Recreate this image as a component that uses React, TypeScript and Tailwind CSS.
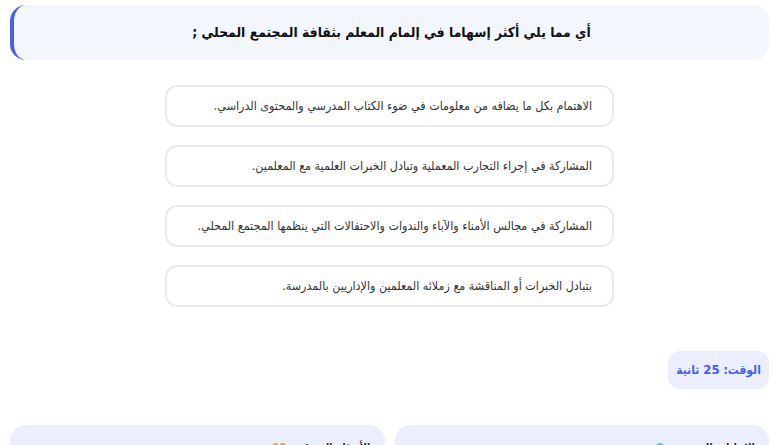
import React from "react";

const options = [
  "الاهتمام بكل ما يضافه من معلومات في ضوء الكتاب المدرسي والمحتوى الدراسي.",
  "المشاركة في إجراء التجارب المعملية وتبادل الخبرات العلمية مع المعلمين.",
  "المشاركة في مجالس الأمناء والآباء والندوات والاحتفالات التي ينظمها المجتمع المحلي.",
  "بتبادل الخبرات أو المناقشة مع زملائه المعلمين والإداريين بالمدرسة.",
];

export default function App() {
  return (
    <div
      dir="rtl"
      className="w-[779px] h-[445px] overflow-hidden bg-white px-[10px] pt-[5px]"
      style={{ fontFamily: '"DejaVu Sans Condensed", "DejaVu Sans", sans-serif' }}
    >
      <div className="h-[55px] rounded-2xl bg-[#f4f6fe] border-l-[4px] border-[#4361ee] flex items-center justify-center">
        <h1 className="text-[13.8px] font-bold text-[#111]">
          أي مما يلي أكثر إسهاما في إلمام المعلم بثقافة المجتمع المحلي ;
        </h1>
      </div>

      <div className="mt-[25px] flex flex-col items-center gap-[18px]">
        {options.map((o, i) => (
          <div
            key={i}
            className="w-[449px] h-[42px] rounded-xl border-2 border-[#e8eaee] bg-white flex items-center pr-[20px] pl-2 text-[12.4px] text-[#333] whitespace-nowrap"
          >
            {o}
          </div>
        ))}
      </div>

      <div className="mt-[44px] flex">
        <div className="h-[38px] w-[101px] rounded-xl bg-[#eaeefd] flex items-center justify-center text-[12px] font-semibold text-[#4361ee] whitespace-nowrap">
          الوقت: <span className="font-bold mx-1 text-[13px]">25</span> ثانية
        </div>
      </div>

      <div className="mt-[36px] flex gap-[10px]">
        <div className="flex-1 h-[80px] rounded-2xl bg-[#eaeefd] pt-[15px] pr-[14px] text-[11px] font-semibold text-[#333] whitespace-nowrap">
          الإجابات الصحيحة: <span className="inline-block w-[8px] h-[8px] rounded-full bg-[#4cc9f0]" />
        </div>
        <div className="flex-1 h-[80px] rounded-2xl bg-[#eaeefd] pt-[15px] pr-[14px] text-[11px] font-semibold text-[#333] whitespace-nowrap">
          الأسئلة المتبقية: <span className="text-[#f8961e] font-bold">20</span>
        </div>
      </div>
    </div>
  );
}
